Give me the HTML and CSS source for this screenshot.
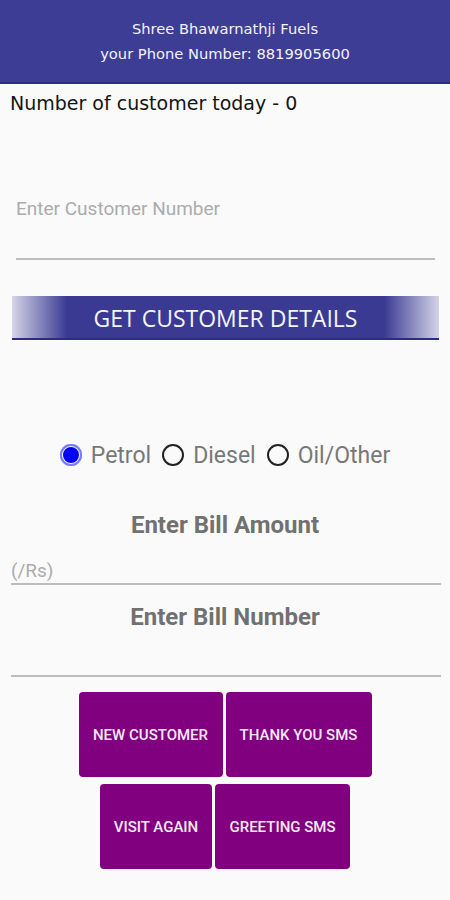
FILE: index.html
```html
<!DOCTYPE html>
<html lang="en">
<head>
    <meta charset="UTF-8">
    <title>Shree Bhawarnathji Fuels</title>
    <link rel="stylesheet" href="styles.css">
</head>
<body>
<div class="header">
    <div class="header-line">Shree Bhawarnathji Fuels</div>
    <div class="header-line">your Phone Number: 8819905600</div>
</div>
<div class="count">Number of customer today - 0</div>

<div class="field field-customer">
    <input type="text" placeholder="Enter Customer Number">
</div>

<div class="get-btn">GET CUSTOMER DETAILS</div>

<!-- fuel type -->
<div class="radios">
    <label class="radio"><span class="dot on"></span>Petrol</label>
    <label class="radio"><span class="dot"></span>Diesel</label>
    <label class="radio"><span class="dot"></span>Oil/Other</label>
</div>

<div class="title">Enter Bill Amount</div>
<div class="field field-amount">
    <input type="text" placeholder="(/Rs)">
</div>
<div class="title title-bill">Enter Bill Number</div>
<div class="field field-bill">
    <input type="text">
</div>

<div class="actions">
    <div class="row">
        <div class="act act-new">NEW CUSTOMER</div>
        <div class="act act-thank">THANK YOU SMS</div>
    </div>
    <div class="row">
        <div class="act act-visit">VISIT AGAIN</div>
        <div class="act act-greet">GREETING SMS</div>
    </div>
</div>
</body>
</html>
```

FILE: styles.css
```css
*{
    margin: 0;
    padding: 0;
    box-sizing: border-box;
}
body{
    width: 450px;
    height: 900px;
    background: #fafafa;
    font-family: Roboto, "Liberation Sans", sans-serif;
    overflow: hidden;
}
.header{
    height: 84px;
    background: #3d3d95;
    border-bottom: 2px solid #2c2c86;
    padding-top: 17px;
    text-align: center;
    color: #f2f2f8;
    font-family: "DejaVu Sans", sans-serif;
    font-size: 14.7px;
}
.header-line{
    height: 25px;
    line-height: 24px;
}
.count{
    height: 38px;
    line-height: 38px;
    padding-left: 10px;
    font-family: "DejaVu Sans", sans-serif;
    font-size: 19px;
    color: #141414;
}
.field{
    border-bottom: 2px solid #bdbdbd;
}
.field input{
    width: 100%;
    border: none;
    outline: none;
    background: transparent;
    font-family: Roboto, sans-serif;
    font-size: 19px;
    color: #333;
}
.field input::placeholder{
    color: #acacac;
}
.field-customer{
    margin: 71px 15px 0 16px;
    height: 67px;
}
.field-customer input{
    height: 30px;
}
.get-btn{
    margin: 36px 11px 0 12px;
    height: 44px;
    line-height: 44px;
    text-align: center;
    color: #f4f4fa;
    font-family: "Open Sans", sans-serif;
    font-size: 23px;
    background: linear-gradient(to right, #d4d4e8 0px, #3a3a93 55px, #3a3a93 calc(100% - 55px), #d4d4e8 100%);
    border-bottom: 2px solid #2c2c88;
}
.radios{
    margin-top: 100px;
    display: flex;
    justify-content: center;
    gap: 11px;
    height: 30px;
    align-items: center;
}
.radio{
    display: flex;
    align-items: center;
    gap: 9px;
    font-size: 23px;
    color: #787878;
}
.dot{
    width: 22px;
    height: 22px;
    border: 2px solid #222;
    border-radius: 50%;
}
.dot.on{
    border: none;
    background: #0000ff;
    box-shadow: inset 0 0 0 2px #7a7aff, inset 0 0 0 3px #fafafa;
}
.title{
    margin-top: 41px;
    height: 28px;
    line-height: 28px;
    text-align: center;
    font-size: 24px;
    font-weight: bold;
    color: #717171;
}
.field-amount{
    margin: 19px 9px 0 11px;
    height: 27px;
}
.field-amount input{
    height: 24px;
}
.title-bill{
    margin-top: 18px;
}
.field-bill{
    margin: 0 9px 0 11px;
    height: 46px;
}
.actions{
    margin-top: 15px;
    display: flex;
    flex-direction: column;
    align-items: center;
    gap: 7px;
}
.row{
    display: flex;
    gap: 3px;
}
.act{
    height: 85px;
    background: #800080;
    border-radius: 4px;
    color: #f4e8f4;
    font-size: 15px;
    font-weight: 500;
    display: flex;
    align-items: center;
    justify-content: center;
}
.act-new{
    width: 144px;
}
.act-thank{
    width: 146px;
}
.act-visit{
    width: 112px;
}
.act-greet{
    width: 135px;
}
```
